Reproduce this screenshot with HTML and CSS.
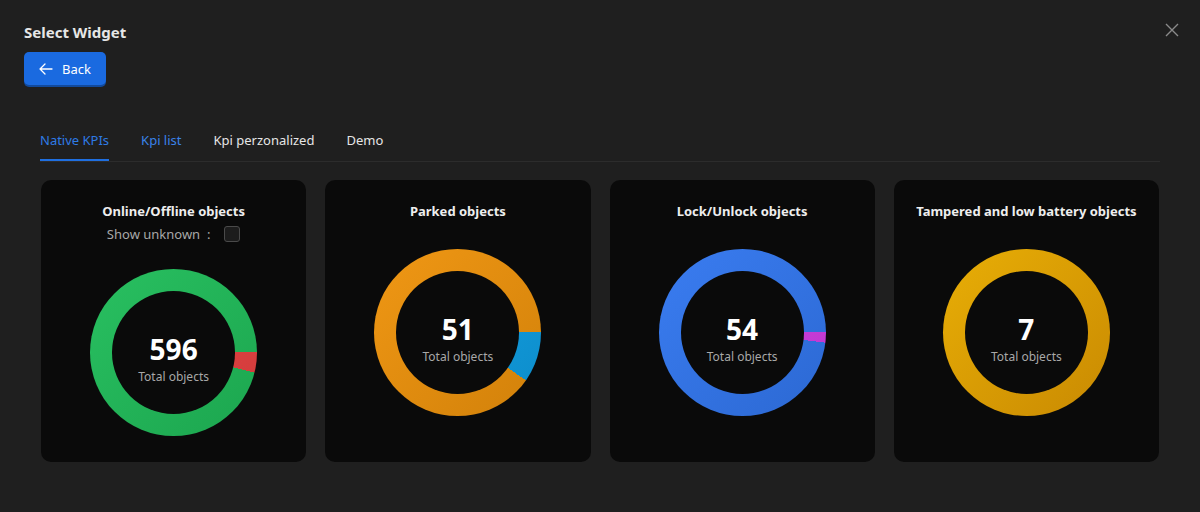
FILE: index.html
```html
<!DOCTYPE html>
<html lang="en">
<head>
  <meta charset="UTF-8" />
  <title>Select Widget</title>
  <link rel="stylesheet" href="styles.css">
</head>
<body>
  <div class="modal">
    <div class="modal-header">
      <h2>Select Widget</h2>
      <button class="btn-back">
        <svg width="14" height="12" viewBox="0 0 14 12"><path d="M6 1 1 6l5 5M1 6h12" fill="none" stroke="#fff" stroke-width="1.3" stroke-linecap="round" stroke-linejoin="round"/></svg>
        Back
      </button>
      <span class="close">
        <svg width="14" height="14" viewBox="0 0 14 14"><path d="M1 1l12 12M13 1 1 13" stroke="#8a8a8a" stroke-width="1.4"/></svg>
      </span>
    </div>

    <div class="modal-body">
      <div class="tabs">
        <span class="tab active">Native KPIs</span>
        <span class="tab link">Kpi list</span>
        <span class="tab">Kpi perzonalized</span>
        <span class="tab">Demo</span>
      </div>

      <div class="cards">
        <div class="card">
          <div class="card-title">Online/Offline objects</div>
          <div class="unknown">Show unknown &nbsp;: <span class="check"></span></div>
          <div class="donut donut-online">
            <div class="hole"><b>596</b><span>Total objects</span></div>
          </div>
        </div>
        <div class="card">
          <div class="card-title">Parked objects</div>
          <div class="donut donut-parked">
            <div class="hole"><b>51</b><span>Total objects</span></div>
          </div>
        </div>
        <div class="card">
          <div class="card-title">Lock/Unlock objects</div>
          <div class="donut donut-lock">
            <div class="hole"><b>54</b><span>Total objects</span></div>
          </div>
        </div>
        <div class="card">
          <div class="card-title">Tampered and low battery objects</div>
          <div class="donut donut-tamper">
            <div class="hole"><b>7</b><span>Total objects</span></div>
          </div>
        </div>
      </div>
    </div>
  </div>
</body>
</html>
```

FILE: styles.css
```css
:root {
  --primary-color: #1a6ae0;
  --card-bg: #0a0a0a;
}
body {
  margin: 0;
  background: #1f1f1f;
  font-family: "Noto Sans", "Open Sans", sans-serif;
  color: #eee;
}
.modal {
  width: 1200px;
  height: 512px;
  position: relative;
}
.modal-header {
  padding: 22px 24px 0;
}
.modal-header h2 {
  margin: 0;
  font-size: 15px;
  font-weight: 700;
  color: #e6e6e6;
  line-height: 20px;
}
.btn-back {
  margin-top: 10px;
  display: flex;
  align-items: center;
  gap: 9px;
  height: 33px;
  padding: 0 15px 0 15px;
  background: var(--primary-color);
  color: #fff;
  border: none;
  border-radius: 5px;
  box-shadow: 0 2px 0 #124a9c;
  font-family: inherit;
  font-size: 13px;
}
.close {
  position: absolute;
  top: 20px;
  right: 21px;
}
.modal-body {
  padding: 0 40px;
  margin-top: 38px;
}
.tabs {
  display: flex;
  gap: 32px;
  border-bottom: 1px solid #2c2c2c;
}
.tab {
  font-size: 13px;
  color: #e6e6e6;
  padding: 8px 0 12px;
  line-height: 18px;
}
.tab.link {
  color: #3a82e8;
}
.tab.active {
  color: #2e7be6;
  box-shadow: inset 0 -2px 0 #1f6fe0;
}
.cards {
  display: grid;
  grid-template-columns: repeat(4, 1fr);
  gap: 19px;
  margin-top: 18px;
  padding: 0 1px;
}
.card {
  background: var(--card-bg);
  border-radius: 10px;
  height: 282px;
  display: flex;
  flex-direction: column;
  align-items: center;
}
.card-title {
  margin-top: 22px;
  font-size: 13px;
  font-weight: 700;
  color: #eee;
  line-height: 18px;
}
.unknown {
  margin-top: 5px;
  font-size: 13px;
  color: #a8a8a8;
  display: flex;
  align-items: center;
  gap: 4px;
}
.check {
  width: 14px;
  height: 14px;
  border: 1px solid #4a4a4a;
  border-radius: 3px;
  background: #1c1c1c;
  margin-left: 10px;
}
.donut {
  width: 167px;
  height: 167px;
  border-radius: 50%;
  margin-top: 29px;
  display: flex;
  align-items: center;
  justify-content: center;
}
.donut-online {
  margin-top: 26px;
  background:
    linear-gradient(135deg, rgba(255,255,255,0.04), rgba(0,0,0,0.12)),
    conic-gradient(#20bd5a 0 90deg, #ec4242 90deg 104deg, #20bd5a 104deg 360deg);
}
.donut-parked {
  background:
    linear-gradient(135deg, rgba(255,255,255,0.04), rgba(0,0,0,0.12)),
    conic-gradient(#ef930b 0 90deg, #0ea0e6 90deg 125deg, #ef930b 125deg 360deg);
}
.donut-lock {
  background:
    linear-gradient(135deg, rgba(255,255,255,0.04), rgba(0,0,0,0.12)),
    conic-gradient(#3277f0 0 90deg, #d63ee8 90deg 97deg, #3277f0 97deg 360deg);
}
.donut-tamper {
  background: linear-gradient(135deg, #e8ae06, #c98a02);
}
.hole {
  width: 123px;
  height: 123px;
  box-sizing: border-box;
  padding-top: 12px;
  border-radius: 50%;
  background: var(--card-bg);
  display: flex;
  flex-direction: column;
  align-items: center;
  justify-content: center;
}
.hole b {
  font-size: 28px;
  color: #fff;
  line-height: 32px;
}
.hole span {
  font-size: 12px;
  color: #a8a8a8;
  line-height: 16px;
  margin-top: 4px;
}
```
